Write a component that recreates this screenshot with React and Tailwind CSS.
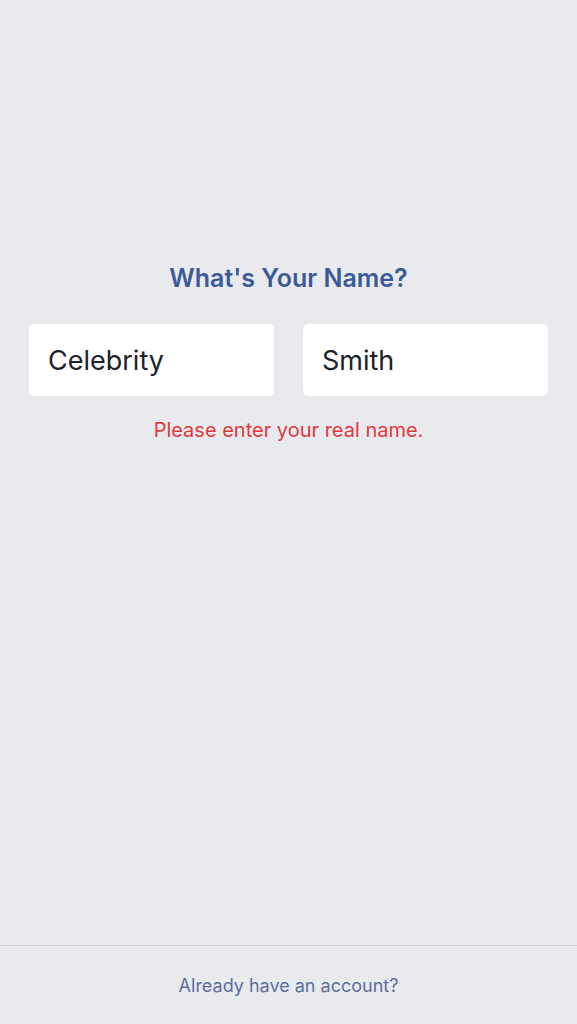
import React, { useState } from 'react';

export default function App() {
    const [first, setFirst] = useState('Celebrity');
    const [last, setLast] = useState('Smith');

    return (
        <div
            className="h-[1024px] flex flex-col bg-[#e9eaee]"
            style={{ fontFamily: 'Inter, "Noto Sans", sans-serif' }}
        >
            <main className="flex-1 pt-[262px] px-[29px]">
                <h1 className="text-center text-[25px] leading-[32px] font-semibold text-[#3d5a98]">
                    What's Your Name?
                </h1>
                <div className="mt-[30px] flex gap-[29px]">
                    <input
                        value={first}
                        onChange={(e) => setFirst(e.target.value)}
                        className="w-0 flex-1 h-[72px] rounded-[5px] bg-white px-[19px] text-[27px] text-[#1d2129] focus:outline-none"
                    />
                    <input
                        value={last}
                        onChange={(e) => setLast(e.target.value)}
                        className="w-0 flex-1 h-[72px] rounded-[5px] bg-white px-[19px] text-[27px] text-[#1d2129] focus:outline-none"
                    />
                </div>
                <p className="mt-[20px] text-center text-[20px] leading-[28px] text-[#e0393e]">
                    Please enter your real name.
                </p>
            </main>

            <footer className="h-[79px] border-t border-[#d3d5da] flex items-center justify-center">
                <span className="text-[18px] text-[#5b6f9e]">Already have an account?</span>
            </footer>
        </div>
    );
}
